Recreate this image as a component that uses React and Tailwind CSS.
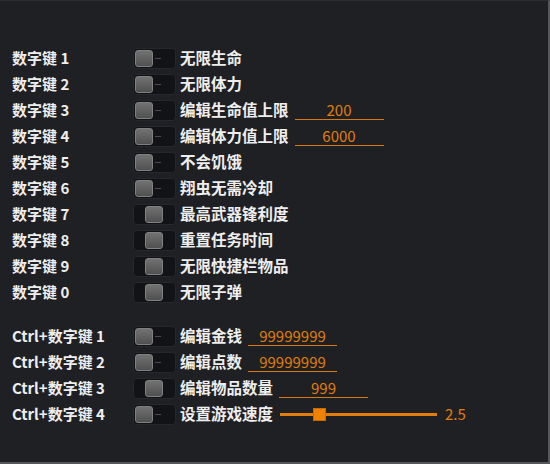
import React from "react";

const keys = [
  { key: "数字键 1", text: "无限生命", mid: false },
  { key: "数字键 2", text: "无限体力", mid: false },
  { key: "数字键 3", text: "编辑生命值上限", mid: false, input: "200" },
  { key: "数字键 4", text: "编辑体力值上限", mid: false, input: "6000" },
  { key: "数字键 5", text: "不会饥饿", mid: false },
  { key: "数字键 6", text: "翔虫无需冷却", mid: false },
  { key: "数字键 7", text: "最高武器锋利度", mid: true },
  { key: "数字键 8", text: "重置任务时间", mid: true },
  { key: "数字键 9", text: "无限快捷栏物品", mid: true },
  { key: "数字键 0", text: "无限子弹", mid: true },
];

const ctrlKeys = [
  { key: "Ctrl+数字键 1", text: "编辑金钱", mid: false, input: "99999999" },
  { key: "Ctrl+数字键 2", text: "编辑点数", mid: false, input: "99999999" },
  { key: "Ctrl+数字键 3", text: "编辑物品数量", mid: true, input: "999" },
  { key: "Ctrl+数字键 4", text: "设置游戏速度", mid: false, slider: "2.5" },
];

const Toggle = ({ mid }) => {
  return (
    <div className="relative w-[43px] h-[21px] rounded-[4px] bg-[#121317] border border-[#26272c] shrink-0">
      {!mid && <div className="absolute left-[21px] top-[9px] w-[6px] h-[1px] bg-[#4a4b50]" />}
      <div
        className={
          mid
            ? "absolute left-[11px] top-[1px] w-[18px] h-[17px] rounded-[3px] border border-[#808080] bg-gradient-to-b from-[#727272] to-[#505050]"
            : "absolute left-[1px] top-[1px] w-[18px] h-[17px] rounded-[3px] border border-[#808080] bg-gradient-to-b from-[#727272] to-[#505050]"
        }
      />
    </div>
  );
};

const Row = ({ item }) => {
  return (
    <div className="flex items-center h-[26px]">
      <div className="w-[121px] shrink-0 text-[15px] font-bold text-[#eeeeee]">{item.key}</div>
      <Toggle mid={item.mid} />
      <div className="ml-[4px] text-[15.5px] font-bold text-[#eeeeee]">{item.text}</div>
      {item.input && (
        <div className="ml-[6px] w-[89px] border-b-[1.5px] border-[#d9790a] text-center text-[15px] leading-[18px] text-[#e07d0c]">
          {item.input}
        </div>
      )}
      {item.slider && (
        <div className="ml-[7px] flex items-center">
          <div className="relative w-[157px] h-[3px] bg-[#e07d0c]">
            <div className="absolute left-[33px] top-[-5px] w-[13px] h-[13px] bg-[#f08200] border border-[#c86a00]" />
          </div>
          <div className="ml-[8px] text-[15px] text-[#e07d0c]">{item.slider}</div>
        </div>
      )}
    </div>
  );
};

const App = () => {
  return (
    <div
      className="w-[550px] h-[464px] bg-[#1f2023] border-r-2 border-b-2 border-r-[#55575b] border-b-[#55575b] border-t border-t-[#2c2d30] pt-[44px] pl-[12px]"
      style={{ fontFamily: '"Noto Sans CJK SC", "Noto Sans", sans-serif' }}
    >
      <div className="flex flex-col">
        {keys.map((item) => (
          <Row key={item.key} item={item} />
        ))}
      </div>
      <div className="flex flex-col mt-[18px]">
        {ctrlKeys.map((item) => (
          <Row key={item.key} item={item} />
        ))}
      </div>
    </div>
  );
};

export default App;
